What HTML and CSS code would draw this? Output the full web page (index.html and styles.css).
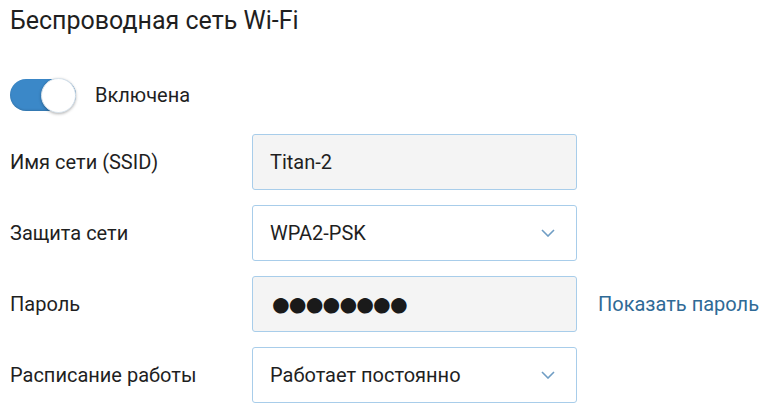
FILE: index.html
```html
<!DOCTYPE html>
<html lang="ru">
<head>
    <meta charset="UTF-8">
    <title>Беспроводная сеть Wi-Fi</title>
    <link rel="stylesheet" href="styles.css">
</head>
<body>

<div class="panel">
    <h1>Беспроводная сеть Wi-Fi</h1>

    <div class="switch-row">
        <span class="switch"><span class="knob"></span></span>
        <span class="switch-label">Включена</span>
    </div>

    <div class="row">
        <label class="label">Имя сети (SSID)</label>
        <div class="field">Titan-2</div>
    </div>

    <div class="row">
        <label class="label">Защита сети</label>
        <div class="field select">
            <span>WPA2-PSK</span>
            <svg class="chevron" width="14" height="8" viewBox="0 0 14 8"><path d="M1 1l6 6 6-6" fill="none" stroke="#6f9dc4" stroke-width="1.6"/></svg>
        </div>
    </div>

    <div class="row">
        <label class="label">Пароль</label>
        <div class="field password">●●●●●●●●</div>
        <a href="#" class="show-link">Показать пароль</a>
    </div>

    <div class="row">
        <label class="label">Расписание работы</label>
        <div class="field select">
            <span>Работает постоянно</span>
            <svg class="chevron" width="14" height="8" viewBox="0 0 14 8"><path d="M1 1l6 6 6-6" fill="none" stroke="#6f9dc4" stroke-width="1.6"/></svg>
        </div>
    </div>
</div>

</body>
</html>
```

FILE: styles.css
```css
* {
    margin: 0;
    padding: 0;
    box-sizing: border-box;
}

body {
    font-family: Roboto, "Noto Sans", sans-serif;
    background: #fff;
    color: #1f1f1f;
}

.panel {
    padding: 6px 0 0 10px;
}

h1 {
    font-size: 25px;
    font-weight: 400;
    line-height: 30px;
    color: #1f1f1f;
}

.switch-row {
    display: flex;
    align-items: center;
    margin-top: 42px;
    height: 34px;
}

.switch {
    position: relative;
    width: 66px;
    height: 32px;
    border-radius: 16px;
    background: #3b88c8;
    box-shadow: inset 0 -1px 2px rgba(0, 0, 0, 0.15);
}

.knob {
    position: absolute;
    right: 0;
    top: 0;
    width: 35px;
    height: 35px;
    margin-top: -1.5px;
    border-radius: 50%;
    background: #fff;
    border: 1px solid #d8e3ec;
    box-shadow: 0 1px 3px rgba(0, 0, 0, 0.3);
}

.switch-label {
    margin-left: 19px;
    font-size: 20px;
}

.row {
    display: flex;
    align-items: center;
    margin-top: 15px;
}

.switch-row + .row {
    margin-top: 22px;
}

.label {
    flex-shrink: 0;
    width: 242px;
    font-size: 20px;
}

.field {
    flex-shrink: 0;
    display: flex;
    align-items: center;
    justify-content: space-between;
    width: 325px;
    height: 56px;
    padding: 0 17px;
    border: 1.5px solid #a8cdea;
    border-radius: 3px;
    background: #f4f4f4;
    font-size: 20px;
}

.select {
    background: #fff;
}

.chevron {
    margin-right: 4px;
}

.password {
    font-size: 36px;
    line-height: 1;
    letter-spacing: -4.9px;
    color: #1a1a1a;
}

.show-link {
    flex-shrink: 0;
    margin-left: 21px;
    font-size: 20px;
    white-space: nowrap;
    color: #2f6a96;
    text-decoration: none;
}
```
